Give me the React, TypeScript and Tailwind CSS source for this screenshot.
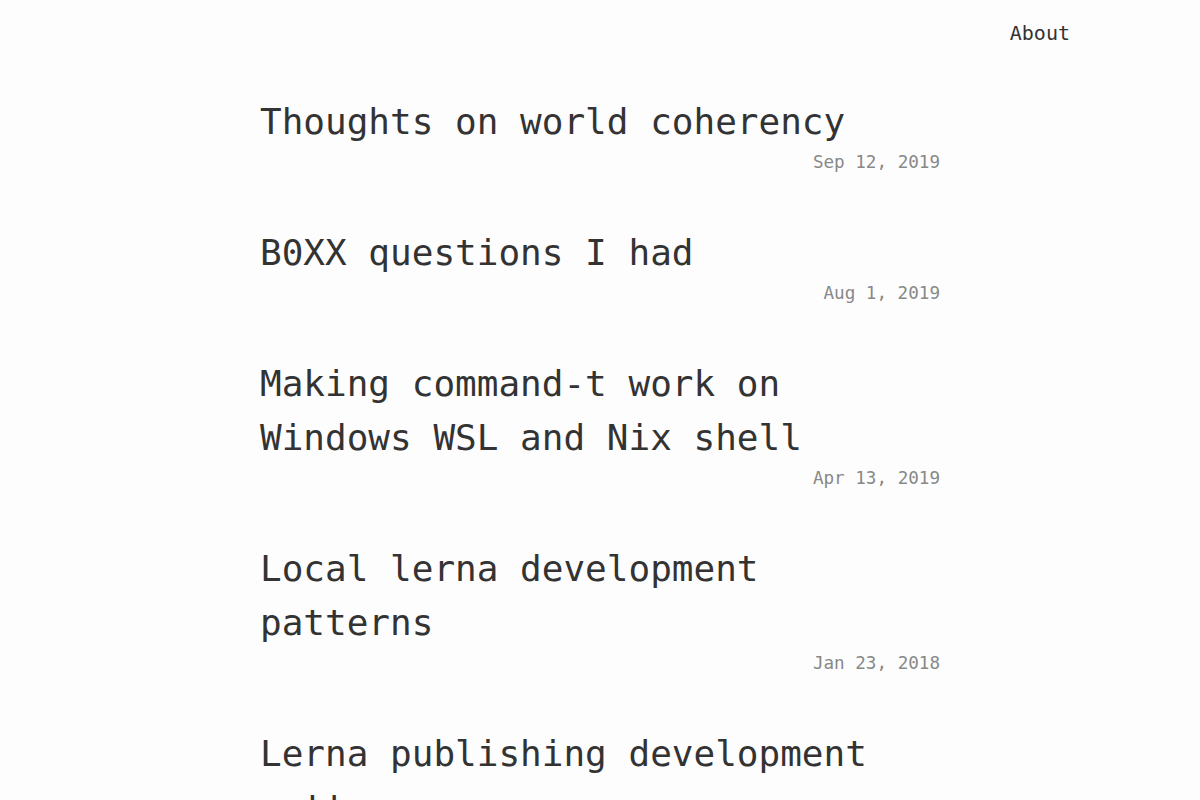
import React from 'react';

interface Post {
  title: string;
  date: string;
}

const posts: Post[] = [
  { title: 'Thoughts on world coherency', date: 'Sep 12, 2019' },
  { title: 'B0XX questions I had', date: 'Aug 1, 2019' },
  { title: 'Making command-t work on Windows WSL and Nix shell', date: 'Apr 13, 2019' },
  { title: 'Local lerna development patterns', date: 'Jan 23, 2018' },
  { title: 'Lerna publishing development patterns', date: 'Jan 4, 2018' },
  { title: 'Introducing react-deep-force-update', date: 'Dec 2, 2017' },
];

const App: React.FC = () => {
  return (
    <div
      className="min-h-screen bg-[#fdfdfd] text-[#333]"
      style={{ fontFamily: '"DejaVu Sans Mono", "Liberation Mono", monospace' }}
    >
      {/* Header */}
      <header className="max-w-[940px] mx-auto pt-[18px] flex justify-end">
        <a href="#" className="text-[20px] leading-[30px] text-[#333]">
          About
        </a>
      </header>

      {/* Post list */}
      <main className="max-w-[680px] mx-auto pt-[47px]">
        {posts.map((post) => (
          <article key={post.title} className="mb-[51px]">
            <h2 className="text-[36px] leading-[54px] font-normal">
              <a href="#">{post.title}</a>
            </h2>
            <div className="text-right text-[17.6px] leading-[26px] text-[#888]">{post.date}</div>
          </article>
        ))}
      </main>
    </div>
  );
};

export default App;
